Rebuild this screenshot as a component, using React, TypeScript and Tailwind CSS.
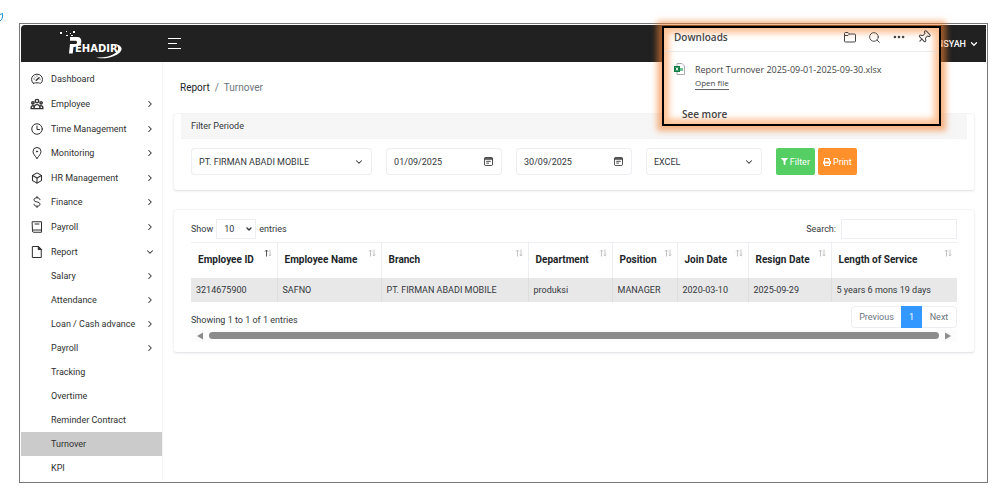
import { ReactNode } from "react";
import { ChevronDown, ChevronRight, Search, Pin, Box, MoreHorizontal } from "lucide-react";
import { FaFilter, FaPrint } from "react-icons/fa";
import { HiOutlineUserGroup } from "react-icons/hi";

function Stroke({ children }: { children: ReactNode }) {
  return (
    <svg viewBox="0 0 24 24" className="w-3 h-3" fill="none" stroke="currentColor" strokeWidth="2" strokeLinecap="round" strokeLinejoin="round">
      {children}
    </svg>
  );
}

const menu = [
  {
    label: "Dashboard",
    icon: (
      <Stroke>
        <path d="M4.500 20.500a11 10.500 0 1 1 15 0c-1.500 1-2.500-.8-4.500-.8H9c-2 0-3 1.800-4.500.8z" />
        <path d="M10.500 14.500l5.500-5" strokeWidth="3" />
        <path d="M12 6v.5M6 12h.5M18 12.500h.2M7.500 8l.3.3" />
      </Stroke>
    ),
  },
  { label: "Employee", arrow: "right", icon: <HiOutlineUserGroup className="w-[14px] h-[14px]" strokeWidth={2.4} /> },
  {
    label: "Time Management",
    arrow: "right",
    icon: (
      <Stroke>
        <circle cx="12" cy="12" r="10.500" />
        <path d="M12 6v7h5" />
      </Stroke>
    ),
  },
  {
    label: "Monitoring",
    arrow: "right",
    icon: (
      <Stroke>
        <path d="M12 23C8 17.500 4 13.500 4 9a8 8 0 0 1 16 0c0 4.500-4 8.500-8 14z" />
        <circle cx="12" cy="9" r="1.200" fill="currentColor" />
      </Stroke>
    ),
  },
  { label: "HR Management", arrow: "right", icon: <Box className="w-3 h-3" strokeWidth={2.2} /> },
  {
    label: "Finance",
    arrow: "right",
    icon: (
      <Stroke>
        <path d="M18 7.500C18 5 15.500 3.500 12 3.500S6 5 6 7.700c0 5.600 12 3 12 8.600 0 2.700-2.500 4.200-6 4.200s-6-1.500-6-4M12 1v2.500M12 20.500V23" />
      </Stroke>
    ),
  },
  {
    label: "Payroll",
    arrow: "right",
    icon: (
      <Stroke>
        <path d="M3 1.500h18v21H5a2 2 0 0 1-2-2zM3 20a2 2 0 0 1 2-2h16M8 6h8" />
      </Stroke>
    ),
  },
  {
    label: "Report",
    arrow: "down",
    icon: (
      <Stroke>
        <path d="M3.500 1h11l6 6v16h-17z" />
        <path d="M14.500 1v6h6z" fill="currentColor" />
      </Stroke>
    ),
  },
];

const subMenu = [
  { label: "Salary", arrow: true },
  { label: "Attendance", arrow: true },
  { label: "Loan / Cash advance", arrow: true },
  { label: "Payroll", arrow: true },
  { label: "Tracking" },
  { label: "Overtime" },
  { label: "Reminder Contract" },
  { label: "Turnover", active: true },
  { label: "KPI" },
];

// width is the column's share of the table
const columns = [
  { title: "Employee ID", value: "3214675900", width: "w-[86px]", sorted: true },
  { title: "Employee Name", value: "SAFNO", width: "w-[104px]" },
  { title: "Branch", value: "PT. FIRMAN ABADI MOBILE", width: "w-[147px]" },
  { title: "Department", value: "produksi", width: "w-[84px]" },
  { title: "Position", value: "MANAGER", width: "w-[65px]" },
  { title: "Join Date", value: "2020-03-10", width: "w-[71px]" },
  { title: "Resign Date", value: "2025-09-29", width: "w-[83px]" },
  { title: "Length of Service", value: "5 years 6 mons 19 days", width: "w-[126px]" },
];

function Logo() {
  return (
    <svg viewBox="0 0 66 34" className="w-[66px] h-[34px]" fill="#fff" role="img" aria-label="Pehadir">
      <rect x="2" y="5" width="2" height="2" />
      <rect x="8" y="4" width="1" height="1" />
      <rect x="8" y="8" width="2" height="1" />
      <rect x="12" y="6" width="1" height="1" />
      <rect x="15" y="4" width="2" height="2" />
      <rect x="13" y="8" width="2" height="1" />
      <path d="M12 10h7.500c5 0 5.500 8.500-.5 9.500l-3.500.5-.8 6.500h-3.700l1-9.500h5.500c2 0 2-3.300 0-3.300H12z" />
      <text x="17" y="25" fontSize="10" fontWeight="700" fontFamily="'DejaVu Sans', sans-serif">EHADIR</text>
      <path d="M57 17c9 1.500 9 8-1 12-6 2.500-12 3-18 1.500 8 .3 13-.7 17-3 6-3.500 7-7 2-10.500z" />
    </svg>
  );
}

function Sidebar() {
  return (
    <aside className="w-[142px] shrink-0 border-r border-gray-100 pt-[5px] pb-px text-[9px] text-[#2f2f2f]">
      <nav>
        <div className="grid auto-rows-fr h-[197px]">
          {menu.map((item) => (
            <a key={item.label} href="#" className="flex items-center pl-[9px] pr-[7px]">
              <span className="w-[14px] mr-[7px] flex justify-center">{item.icon}</span>
              <span className="flex-1">{item.label}</span>
              {item.arrow === "right" && <ChevronRight className="w-[10px] h-[10px]" strokeWidth={2.5} />}
              {item.arrow === "down" && <ChevronDown className="w-[10px] h-[10px]" strokeWidth={2.5} />}
            </a>
          ))}
        </div>
        {subMenu.map((item) => (
          <a
            key={item.label}
            href="#"
            className={`flex items-center h-6 pl-[30px] pr-[7px] ${item.active ? "bg-[#cbcbcb]" : ""}`}
          >
            <span className="flex-1">{item.label}</span>
            {item.arrow && <ChevronRight className="w-[10px] h-[10px]" strokeWidth={2.5} />}
          </a>
        ))}
      </nav>
    </aside>
  );
}

function SelectBox({ label, value }: { label: string; value: string }) {
  return (
    <div className="relative">
      <select aria-label={label} className="appearance-none w-full h-[27px] pl-[7px] pr-6 border border-gray-200/70 rounded-sm bg-white">
        <option>{value}</option>
      </select>
      <ChevronDown className="absolute right-2 top-[9px] w-[10px] h-[10px] pointer-events-none" strokeWidth={2.5} />
    </div>
  );
}

function DateBox({ label, value }: { label: string; value: string }) {
  return (
    <div className="relative">
      <input aria-label={label} defaultValue={value} className="w-full h-[27px] pl-[7px] pr-6 border border-gray-200/70 rounded-sm bg-white" />
      <svg viewBox="0 0 10 10" className="absolute right-[9px] top-[9px] w-[9px] h-[9px] pointer-events-none" fill="none" stroke="#333">
        <rect x="0.500" y="0.500" width="9" height="9" rx="1.500" />
        <path d="M0.500 2.500h9M0.500 1.500h9M2.500 4.800h5M2.500 6.800h3" />
      </svg>
    </div>
  );
}

function FilterCard() {
  return (
    <section className="rounded-sm border border-gray-100 border-b-gray-200 px-[7px] shadow-xs">
      <h2 className="h-[25px] px-[10px] flex items-center bg-[#f6f6f6] border-b border-gray-100">Filter Periode</h2>
      <form className="grid grid-cols-[25fr_16fr_16fr_16fr_25fr] gap-[14px] px-[10px] pt-[9px] pb-[15px]">
        <SelectBox label="Branch" value="PT. FIRMAN ABADI MOBILE" />
        <DateBox label="Start date" value="01/09/2025" />
        <DateBox label="End date" value="30/09/2025" />
        <SelectBox label="Format" value="EXCEL" />
        <div className="flex gap-[3px] text-white">
          <button type="button" className="h-[27px] w-[39px] flex items-center justify-center gap-[2px] rounded-xs bg-[#55ce63]">
            <FaFilter className="w-[7px] h-[7px]" />
            Filter
          </button>
          <button type="button" className="h-[27px] w-[39px] flex items-center justify-center gap-[2px] rounded-xs bg-[#ff902b]">
            <FaPrint className="w-2 h-2" />
            Print
          </button>
        </div>
      </form>
    </section>
  );
}

function SortArrows({ sorted }: { sorted?: boolean }) {
  return (
    <svg viewBox="0 0 8 8" className="absolute right-[5px] top-[6px] w-2 h-2" fill="none" stroke="#c4c4c4">
      <path d="M2.500 7.500V1M1 2.500L2.500 1 4 2.500" stroke={sorted ? "#555" : "#c4c4c4"} />
      <path d="M6 .5V7M4.800 5.500L6 7l1.200-1.500" />
    </svg>
  );
}

function TableCard() {
  return (
    <section className="mt-[18px] rounded-sm border border-gray-100 border-b-gray-200 px-[17px] pt-[9px] pb-[10px] shadow-xs">
      <div className="flex items-center justify-between h-5">
        <label className="flex items-center gap-[3px]">
          Show
          <span className="relative">
            <select className="appearance-none w-10 h-5 pl-[7px] border border-gray-200/70 bg-white">
              <option>10</option>
            </select>
            <ChevronDown className="absolute right-[3px] top-[6px] w-2 h-2 pointer-events-none" strokeWidth={4} />
          </span>
          entries
        </label>
        <label className="flex items-center gap-[5px]">
          Search:
          <input type="text" className="w-[116px] h-5 border border-gray-200/70 px-1" />
        </label>
      </div>

      <table className="w-full table-fixed mt-[3px] border-collapse">
        <thead>
          <tr className="h-[35px] border-t border-gray-200/70">
            {columns.map((col) => (
              <th key={col.title} className={`${col.width} relative pl-[7px] text-left text-[10px] font-bold whitespace-nowrap text-[#212529] border-r border-gray-200/70 last:border-r-0`}>
                {col.title}
                <SortArrows sorted={col.sorted} />
              </th>
            ))}
          </tr>
        </thead>
        <tbody>
          <tr className="h-6 bg-[#e8e8e8]">
            {columns.map((col) => (
              <td key={col.title} className="pl-[5px] whitespace-nowrap border-r border-[#dedede] last:border-r-0">
                {col.value}
              </td>
            ))}
          </tr>
        </tbody>
      </table>

      <div className="flex justify-between mt-1">
        <p className="pt-[7px]">Showing 1 to 1 of 1 entries</p>
        <div className="flex h-[22px] text-[#6c757d]">
          <button className="w-[50px] border border-r-0 border-gray-200/70 rounded-l-sm">Previous</button>
          <button className="w-[21px] bg-[#3398ff] text-white">1</button>
          <button className="w-[35px] border border-l-0 border-gray-200/70 rounded-r-sm">Next</button>
        </div>
      </div>

      <div className="flex items-center gap-[6px] h-3 mt-[2px] px-[6px] bg-[#fcfcfc]">
        <button aria-label="Scroll left" className="w-[6px] h-2">
          <svg viewBox="0 0 6 8" className="w-[6px] h-2" fill="#8b8b8b"><path d="M6 .5v7L0 4z" /></svg>
        </button>
        <div className="flex-1 h-[7px] rounded-full bg-[#8b8b8b]" />
        <button aria-label="Scroll right" className="w-[6px] h-2">
          <svg viewBox="0 0 6 8" className="w-[6px] h-2" fill="#8b8b8b"><path d="M0 .5v7L6 4z" /></svg>
        </button>
      </div>
    </section>
  );
}

function Downloads() {
  return (
    <div
      className="absolute right-[46px] top-[2px] w-[279px] h-[100px] border-2 border-black bg-white text-[#444]
        shadow-[0_0_6px_5px_rgba(244,130,50,0.6),inset_0_0_6px_5px_rgba(255,160,90,0.65)]
        font-['Open_Sans','Noto_Sans',sans-serif]"
    >
      <div className="flex items-center h-6 pl-[10px] pr-2 pb-[5px] border-b border-gray-300/50">
        <h2 className="flex-1 text-[10px] font-semibold">Downloads</h2>
        <div className="flex items-center gap-[11px]">
          <button aria-label="Open folder">
            <svg viewBox="0 0 14 12" className="w-[14px] h-3" fill="none" stroke="currentColor">
              <path d="M1.500 2.500a1 1 0 0 1 1-1h2.500l1.500 1.500h5a1 1 0 0 1 1 1v6a1 1 0 0 1-1 1h-9a1 1 0 0 1-1-1zM1.500 4.500h3.500l1.500-1.500" strokeLinejoin="round" />
            </svg>
          </button>
          <button aria-label="Search"><Search className="w-[13px] h-[13px]" strokeWidth={1.7} /></button>
          <button aria-label="More"><MoreHorizontal className="w-[14px] h-[14px]" strokeWidth={2.5} /></button>
          <button aria-label="Pin"><Pin className="w-[14px] h-[14px] rotate-45" strokeWidth={1.7} /></button>
        </div>
      </div>
      <div className="flex gap-[10px] pl-[10px] pt-[11px]">
        <svg viewBox="0 0 11 12" className="w-[11px] h-3">
          <path d="M3 .5h5l2.500 2.500v8.500H3z" fill="#fff" stroke="#aaa" />
          <path d="M6 5h3v3H6z" fill="#6fc596" />
          <rect y="3" width="6" height="6" fill="#107c41" />
          <path d="M2 4.500l2 3M4 4.500l-2 3" stroke="#fff" />
        </svg>
        <div>
          <p className="text-[9px] leading-[14px]">Report Turnover 2025-09-01-2025-09-30.xlsx</p>
          <a href="#" className="block w-fit text-[8px] leading-3 border-b border-[#666]">Open file</a>
        </div>
      </div>
      <a href="#" className="block ml-[18px] mt-4 text-[10px] leading-4 font-semibold">See more</a>
    </div>
  );
}

export default function App() {
  return (
    <div className="relative bg-white pt-[23px] pl-[19px] pr-[10px] pb-4 text-[9px] leading-[14px] text-[#33373b] font-[Roboto,sans-serif]">
      <svg viewBox="0 0 4 10" className="absolute left-0 top-3 w-1 h-[10px]" fill="none" stroke="#1f93cf">
        <path d="M0 2.500l2.500-1M2.500 1.500C3 5 2 8 0 9" />
      </svg>

      <div className="relative border border-[#777] p-px">
        <header className="flex items-center h-[37px] bg-[#212121] rounded-tl-sm pr-[7px] text-white">
          <div className="w-[142px] pl-[37px]">
            <Logo />
          </div>
          <button aria-label="Toggle menu" className="ml-[5px]">
            <svg viewBox="0 0 13 11" className="w-[13px] h-[11px]" stroke="#fff">
              <path d="M0 .5h13M0 5.500h9M0 10.500h13" />
            </svg>
          </button>
          <button className="ml-auto flex items-center gap-[3px] font-medium">
            NSYAH
            <ChevronDown className="w-[10px] h-[10px]" strokeWidth={3} />
          </button>
        </header>

        <div className="flex">
          <Sidebar />
          <main className="flex-1 min-w-0 pl-[10px] pr-[11px] pt-[19px]">
            <nav aria-label="Breadcrumb" className="flex gap-[5px] pl-[7px] mb-[18px] text-[10px]">
              <a href="#" className="text-[#212529]">Report</a>
              <span className="text-[#6c757d]">/</span>
              <span className="text-[#6c757d]">Turnover</span>
            </nav>
            <FilterCard />
            <TableCard />
          </main>
        </div>

        <Downloads />
      </div>
    </div>
  );
}
